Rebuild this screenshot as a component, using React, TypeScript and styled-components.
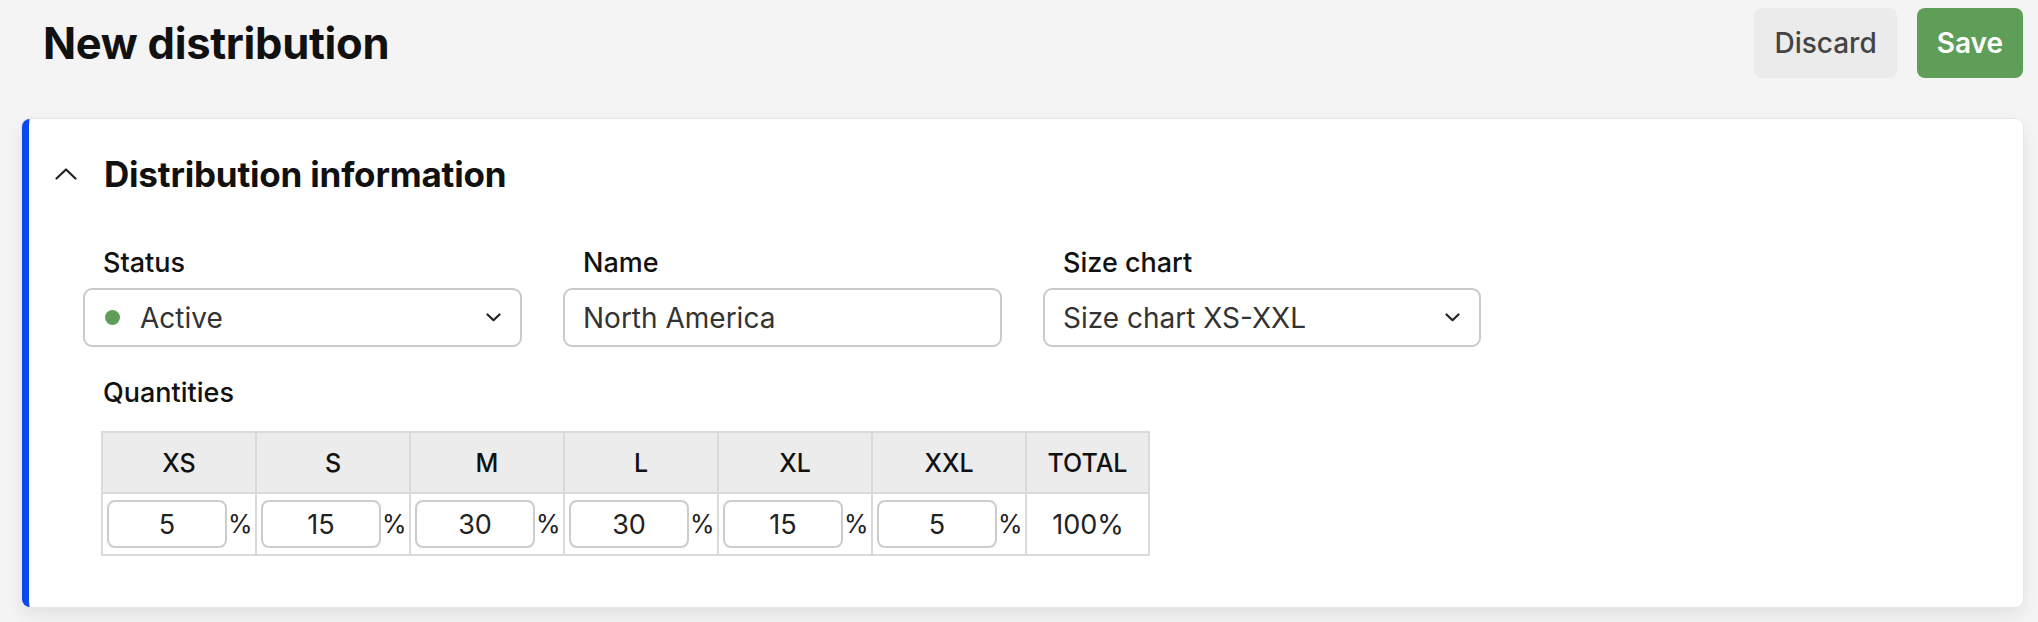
import React from "react";
import styled, { createGlobalStyle } from "styled-components";

const GlobalStyle = createGlobalStyle`
  html, body {
    margin: 0;
    padding: 0;
    background: #f4f4f4;
    font-family: Inter, "Noto Sans", "Liberation Sans", sans-serif;
    color: #111;
  }
  * { box-sizing: border-box; }
`;

const Page = styled.div`
  width: 2038px;
  height: 622px;
  padding: 8px 15px 0 22px;
  background: #f4f4f4;
  overflow: hidden;
`;

const TopBar = styled.header`
  display: flex;
  align-items: center;
  justify-content: space-between;
  height: 70px;
  padding-left: 21px;
`;

const PageTitle = styled.h1`
  margin: 0;
  font-size: 43.5px;
  font-weight: 700;
  letter-spacing: -0.3px;
  color: #111;
`;

const Actions = styled.div`
  display: flex;
  gap: 20px;
`;

const Button = styled.button<{ $primary?: boolean }>`
  height: 70px;
  padding: 0 20px;
  border: none;
  border-radius: 8px;
  font-family: inherit;
  font-size: 28px;
  font-weight: ${(p) => (p.$primary ? 600 : 500)};
  background: ${(p) => (p.$primary ? "#5f9e59" : "#ebebeb")};
  color: ${(p) => (p.$primary ? "#ffffff" : "#444444")};
`;

const Card = styled.section`
  margin-top: 41px;
  height: 488px;
  background: #fff;
  border-left: 7px solid #0b48ee;
  border-radius: 8px;
  box-shadow: 0 0 0 1px #e6e6e6, 0 8px 18px rgba(0, 0, 0, 0.08);
  padding: 36px 0 0 26px;
`;

const CardHeader = styled.div`
  display: flex;
  align-items: center;
  gap: 27px;
  height: 38px;
`;

const SectionTitle = styled.h2`
  margin: 0;
  font-size: 35px;
  font-weight: 700;
  letter-spacing: -0.2px;
  color: #111;
`;

const FieldsRow = styled.div`
  display: grid;
  grid-template-columns: 439px 439px 438px;
  column-gap: 41px;
  margin-top: 55px;
  margin-left: 28px;
`;

const Field = styled.div`
  display: flex;
  flex-direction: column;
  gap: 10px;
`;

const Label = styled.label`
  display: block;
  height: 30px;
  line-height: 30px;
  padding-left: 20px;
  font-size: 27px;
  font-weight: 500;
  color: #111;
`;

const Control = styled.div`
  display: flex;
  align-items: center;
  height: 59px;
  padding: 0 19px 0 18px;
  border: 2px solid #cacaca;
  border-radius: 9px;
  font-size: 28px;
  color: #333;
  background: #fff;
`;

const ControlText = styled.span`
  flex: 1;
`;

const Dot = styled.span`
  width: 15px;
  height: 15px;
  border-radius: 50%;
  background: #5f9e59;
  margin-right: 20px;
  margin-left: 2px;
`;

const QuantitiesBlock = styled.div`
  margin-top: 31px;
  margin-left: 28px;
`;

const Table = styled.table`
  margin-top: 23px;
  margin-left: 18px;
  width: 1047px;
  border-collapse: collapse;
  border: 2px solid #dadada;
  table-layout: fixed;
`;

const Col = styled.col<{ $w: number }>`
  width: ${(p) => p.$w}px;
`;

const HeadCell = styled.th`
  height: 61px;
  background: #ececec;
  border: 2px solid #dadada;
  font-size: 25px;
  font-weight: 500;
  color: #111;
  text-align: center;
  padding: 0;
`;

const BodyCell = styled.td`
  height: 62px;
  border: 2px solid #dadada;
  padding: 0 3px 0 4px;
  font-size: 27px;
  color: #222;
  text-align: center;
`;

const QtyWrap = styled.div`
  display: flex;
  align-items: center;
  gap: 1px;
`;

const QtyInput = styled.div`
  flex: 0 0 120px;
  width: 120px;
  height: 48px;
  border: 2px solid #cccccc;
  border-radius: 8px;
  display: flex;
  align-items: center;
  justify-content: center;
  font-size: 27px;
  color: #222;
`;

const Percent = styled.span`
  font-size: 25px;
  color: #222;
`;

const ChevronDown = () => (
  <svg width="15" height="9" viewBox="0 0 15 9" fill="none">
    <polyline points="1.5,1.5 7.5,7.2 13.5,1.5" stroke="#222" strokeWidth="2.2" strokeLinecap="round" strokeLinejoin="round" />
  </svg>
);

const ChevronUp = () => (
  <svg width="22" height="12" viewBox="0 0 22 12" fill="none">
    <polyline points="1.5,10.5 11,1.5 20.5,10.5" stroke="#222" strokeWidth="2.2" strokeLinecap="round" strokeLinejoin="round" />
  </svg>
);

const sizes = [
  { name: "XS", value: "5" },
  { name: "S", value: "15" },
  { name: "M", value: "30" },
  { name: "L", value: "30" },
  { name: "XL", value: "15" },
  { name: "XXL", value: "5" },
];

export default function App() {
  return (
    <>
      <GlobalStyle />
      <Page>
        <TopBar>
          <PageTitle>New distribution</PageTitle>
          <Actions>
            <Button>Discard</Button>
            <Button $primary>Save</Button>
          </Actions>
        </TopBar>
        <Card>
          <CardHeader>
            <ChevronUp />
            <SectionTitle>Distribution information</SectionTitle>
          </CardHeader>
          <FieldsRow>
            <Field>
              <Label>Status</Label>
              <Control>
                <Dot />
                <ControlText>Active</ControlText>
                <ChevronDown />
              </Control>
            </Field>
            <Field>
              <Label>Name</Label>
              <Control>
                <ControlText>North America</ControlText>
              </Control>
            </Field>
            <Field>
              <Label>Size chart</Label>
              <Control>
                <ControlText>Size chart XS-XXL</ControlText>
                <ChevronDown />
              </Control>
            </Field>
          </FieldsRow>
          <QuantitiesBlock>
            <Label>Quantities</Label>
            <Table>
              <colgroup>
                {sizes.map((s) => (
                  <Col key={s.name} $w={154} />
                ))}
                <Col $w={123} />
              </colgroup>
              <thead>
                <tr>
                  {sizes.map((s) => (
                    <HeadCell key={s.name}>{s.name}</HeadCell>
                  ))}
                  <HeadCell>TOTAL</HeadCell>
                </tr>
              </thead>
              <tbody>
                <tr>
                  {sizes.map((s) => (
                    <BodyCell key={s.name}>
                      <QtyWrap>
                        <QtyInput>{s.value}</QtyInput>
                        <Percent>%</Percent>
                      </QtyWrap>
                    </BodyCell>
                  ))}
                  <BodyCell>100%</BodyCell>
                </tr>
              </tbody>
            </Table>
          </QuantitiesBlock>
        </Card>
      </Page>
    </>
  );
}
